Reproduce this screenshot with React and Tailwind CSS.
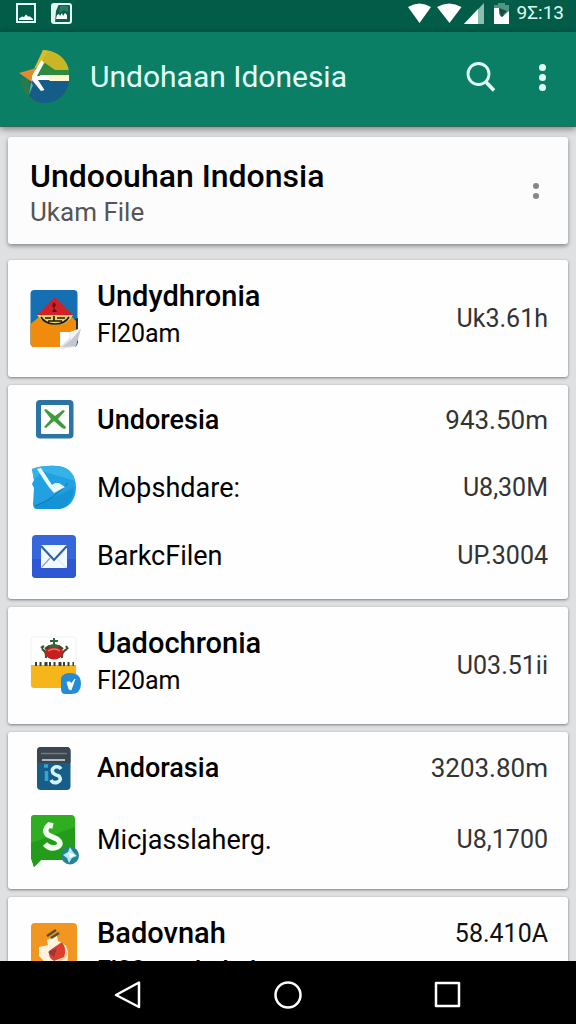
import React from "react";

function PictureIcon() {
  return (
    <svg width="20" height="20" viewBox="0 0 20 20" aria-hidden="true">
      <rect x="1" y="1" width="18" height="18" fill="none" stroke="#e4fff6" strokeWidth="2" />
      <path d="M3 17 V15.500 L6 13.500 L8 14 L10 11.500 L12 13.500 L14 13.500 L17 16 V17 Z" fill="#fff" />
    </svg>
  );
}

function NoteIcon() {
  return (
    <svg width="21" height="21" viewBox="0 0 21 21" aria-hidden="true">
      <rect x="1" y="1" width="19" height="19" rx="2" fill="#0a6049" stroke="#e4fff6" strokeWidth="2" />
      <path d="M1 1 H8 L5 8 L4 20 H1 Z" fill="#dff7ee" />
      <path d="M9 3 H17 V9 L13 7 L8 10 Z" fill="#2b7b66" />
      <path d="M5 16 L6 12 L8 11 L9 13 L11 10 L12 13 L14 10 L16 12 V16 Z" fill="#fff" />
    </svg>
  );
}

function StatusIcons() {
  return (
    <svg width="102" height="24" viewBox="407 1 102 24" aria-hidden="true">
      <path d="M408 7 Q419.500 0 431 7 L419.500 23 Z" fill="#fff" />
      <path d="M437 7 Q449 0 461.500 7 L449.500 23 Z" fill="#fff" />
      <path d="M464 24 L484 3 V24 Z" fill="#8dbfae" />
      <path d="M464 24 L478 9 V24 Z" fill="#fff" />
      <path d="M494 5 H498 V3 H505 V5 H509 V15 H494 Z" fill="#4f9582" />
      <path d="M494 8 H499 V14 L502 17 L509 11 V24 H494 Z" fill="#fff" />
      <path d="M499 8 L507 11 L501 17 Z" fill="#16513f" />
    </svg>
  );
}

function Logo() {
  return (
    <svg width="52" height="56" viewBox="18 50 52 56" className="shrink-0" aria-hidden="true">
      <path d="M43 51 C57 51 68 61 69 73 H36 Z" fill="#c9b526" />
      <path d="M37 67 L45 64 L55 71 L69 71 V76 H33 Z" fill="#2d8a3f" />
      <path d="M20 80 C22 94 30 103 44 104 L34 80 Z" fill="#2a7a4c" />
      <path d="M30 81 H69 C68 95 57 104 44 104 C38 104 33 101 29 97 Z" fill="#155c88" />
      <path d="M43 51 L48 53 L38 68 L34 70 Z" fill="#d7bd2c" />
      <path d="M19 74 L36 69 L32 83 Z" fill="#e08c2c" />
      <path d="M35 70 L31 82 L36 77 Z" fill="#f0c46a" />
      <path d="M40 76 H69 V82 H50 L48 80 H38 Z" fill="#fff6cf" />
      <path d="M41.500 61 L44 64 L37 77 H48 L50 81 H38 L44.500 91 L41 92 L32 81 V77 Z" fill="#fff" />
      <path d="M31 83 L29 96 L33 86 Z" fill="#57b9a0" />
    </svg>
  );
}

function SearchIcon() {
  return (
    <svg width="30" height="32" viewBox="466 61 30 32" fill="none" stroke="#dffff5" aria-hidden="true">
      <circle cx="478.500" cy="74" r="10.500" strokeWidth="2.800" />
      <path d="M485.500 81.500 L494 90.500" strokeWidth="3.600" />
    </svg>
  );
}

function FolderIcon() {
  return (
    <svg width="52" height="60" viewBox="30 288 52 60" className="shrink-0" aria-hidden="true">
      <rect x="30.500" y="289" width="47" height="57" rx="4" fill="#1470b3" />
      <path d="M70 320 L78 317 V342 L66 346 Z" fill="#2a3138" />
      <path d="M55 296 L73 314 H37 Z" fill="#d02128" />
      <path d="M54 301 l2 3 -2 3 3 4 h-5 l2 -4 -2 -2 z" fill="#5d0e15" />
      <path d="M30.500 323 L39 316 L55 323 L72 316 L76 320 V346 H34.500 Q30.500 346 30.500 342 Z" fill="#f18b0c" />
      <path d="M37 314 H73 Q68 324 55 324 Q44 324 37 314 Z" fill="#eed36a" />
      <path d="M41 316 Q45 323 55 323 Q65 323 69 316 M45 317 H51 M57 317 H65 M54 315 V320 M48 320 H62" fill="none" stroke="#1c1a12" strokeWidth="1.700" />
      <path d="M60 331 H72 L81 327 L75 346 L61 348 Z" fill="#e4e5ea" />
      <path d="M60 331 H69 L70 336 L60 346 Z" fill="#fff" />
      <path d="M62 346 L72 338 L81 328 L76 345 Z" fill="#c4c7cf" />
      <path d="M70 331 L81 327 L71 339 Z" fill="#f5f5f7" />
    </svg>
  );
}

function CrossIcon() {
  return (
    <svg width="52" height="40" viewBox="30 401 52 40" className="shrink-0" aria-hidden="true">
      <rect x="36" y="401" width="37.500" height="38.500" rx="4" fill="#2b74a6" />
      <rect x="41" y="406" width="28" height="29" rx="1" fill="#fff" />
      <path d="M44 411 L46 410 L55 417 L63 411 L65 412 L58 420 L66 428 L65 430 L62 429 L54 422 L46 429 L44 428 L51 420 Z" fill="#3f9c3c" />
    </svg>
  );
}

function ShareIcon() {
  return (
    <svg width="52" height="46" viewBox="30 466 52 46" className="shrink-0" aria-hidden="true">
      <path d="M32 470 Q43 466 58 467 C69 468 76 477 76 488 C76 502 68 510 58 510 H37 Q33 510 33 505 L34 489 L32 485 L34 481 Z" fill="#21a1e1" />
      <path d="M32 470 Q43 466 58 467 C69 468 74 475 75 482 L42 472 L34 481 Z" fill="#36b2ea" />
      <path d="M34 507 L74 489 C73 502 66 510 57 510 H37 Z" fill="#1494d5" />
      <path d="M35 507 Q54 500 68 484" fill="none" stroke="#1474ad" strokeWidth="1" />
      <path d="M37 470 L41 469 L52 486 L55 484 L59 484 L65 488 L54 494 Q49 489 44 481 Z" fill="#e9fbff" />
    </svg>
  );
}

function MailIcon() {
  return (
    <svg width="52" height="44" viewBox="30 537 52 44" className="shrink-0" aria-hidden="true">
      <rect x="32" y="538" width="44" height="43" rx="4" fill="#3566dc" />
      <path d="M32 562 H76 V577 Q76 581 72 581 H36 Q32 581 32 577 Z" fill="#2e58d3" />
      <rect x="41" y="548" width="26" height="23" rx="1" fill="#f2faff" />
      <path d="M41 549 L54 563 L67 549" fill="none" stroke="#2e62a7" strokeWidth="2.200" />
      <path d="M42 570 L50 561" stroke="#8f9fc0" strokeWidth="1.200" />
      <path d="M58 562 L66 571" stroke="#d4e1f1" strokeWidth="1" />
    </svg>
  );
}

function PotIcon() {
  return (
    <svg width="52" height="60" viewBox="30 638 52 60" className="shrink-0" aria-hidden="true">
      <rect x="31" y="639" width="45" height="50" rx="3" fill="#fefefe" stroke="#f1f1f1" />
      <path d="M31 667 H76 V690 H34 Q31 690 31 687 Z" fill="#f6b51b" />
      <path d="M42 651 Q47 654 46 660 M67 651 Q61 654 62 660 M41 650 l3 -2 M66 648 l2 3" fill="none" stroke="#3e5230" strokeWidth="2.200" />
      <ellipse cx="54" cy="654" rx="9" ry="7.500" fill="#c7201c" />
      <path d="M45 651 Q54 644 63 651" fill="none" stroke="#42452b" strokeWidth="2.200" />
      <path d="M54 640 V648 M50 643 H58 M48 648 H60" stroke="#2f6936" strokeWidth="2" />
      <path d="M48 653 Q54 649 60 653" fill="none" stroke="#ee7165" strokeWidth="1.500" />
      <path d="M35 666 H74" stroke="#33402b" strokeWidth="4" strokeDasharray="2 2.500 2 3 3 1.500" />
      <path d="M61 680 Q63 675 70 675 Q81 675 81 686 Q81 696 71 696 H65 Q61 696 61 691 Z" fill="#258bd6" />
      <path d="M67 684 L70 684 L71 686 L75 681 L71 692 L69 691 Z" fill="#f2ffff" stroke="#f2ffff" />
    </svg>
  );
}

function PhoneIcon() {
  return (
    <svg width="52" height="44" viewBox="30 746 52 44" className="shrink-0" aria-hidden="true">
      <rect x="37" y="747" width="33.500" height="43" rx="4" fill="#165d88" />
      <path d="M37 763 V751 Q37 747 41 747 H66 Q70.500 747 70.500 751 V763 Z" fill="#3d454f" />
      <path d="M41 753.500 H67" stroke="#717983" strokeWidth="1.500" />
      <path d="M42 760 H65" stroke="#d8e1e7" strokeWidth="1.500" />
      <path d="M61 769 Q59 766 55 767 Q51 769 53 773 Q55 775 59 776 Q62 780 58 782 Q53 784 51 780" fill="none" stroke="#d0f5fd" strokeWidth="3.600" />
      <path d="M44 766 H48 M46.500 771 V781" stroke="#35a5cb" strokeWidth="3.500" />
    </svg>
  );
}

function ChatIcon() {
  return (
    <svg width="52" height="54" viewBox="30 816 52 54" className="shrink-0" aria-hidden="true">
      <path d="M34 818 H71 Q75 818 75 822 V863 H41 L34 870 L31 861 V821 Q31 818 34 818 Z" fill="#2eae20" />
      <path d="M31 846 L75 830 V863 H41 L34 870 L31 861 Z" fill="#239c1b" />
      <path d="M53 829 L49 828 Q43 833 48 838 L57 842 Q63 847 57 850 Q50 853 45 847" fill="none" stroke="#f3fff0" strokeWidth="5.500" />
      <circle cx="70" cy="858.500" r="9" fill="#27828d" />
      <path d="M63 858 L68 855 L70 850 L73 855 L77 859 L72 861 L69 866 L67 861 Z" fill="#aee8f5" />
      <path d="M68 855 L75 858 L70 861 Z" fill="#fff" />
    </svg>
  );
}

function FruitIcon() {
  return (
    <svg width="52" height="66" viewBox="30 922 52 66" className="shrink-0" aria-hidden="true">
      <rect x="31" y="922" width="46" height="57" rx="4" fill="#f29622" />
      <path d="M47 939 L57 935 L58 940 Q68 942 68 954 Q68 968 56 971 Q46 966 43 959 L39 955 L39 946 L48 944 Z" fill="#fff3df" />
      <path d="M58 941 Q68 947 67 954 Q64 961 56 961 Q65 956 64 948 Z" fill="#f8c98e" />
      <path d="M49 950 L56 945 L62 941 Q67 948 64 956 L54 960 Q48 957 49 950 Z" fill="#dc3f2b" />
      <path d="M48 951 L57 947 L54 956 Z" fill="#9a3542" />
      <path d="M47 935 L56 929 M51 937 L59 932" stroke="#56502b" strokeWidth="2.500" />
    </svg>
  );
}

const groups = [
  {
    rows: [{ icon: FolderIcon, title: "Undydhronia", sub: "Fl20am", amount: "Uk3.61h" }],
  },
  {
    pad: "pt-px pb-[9px]",
    height: "min-h-[68px]",
    rows: [
      { icon: CrossIcon, title: "Undoresia", bold: true, amount: "943.50m" },
      { icon: ShareIcon, title: "Moþshdare:", amount: "U8,30M" },
      { icon: MailIcon, title: "BarkcFilen", amount: "UP.3004" },
    ],
  },
  {
    rows: [{ icon: PotIcon, title: "Uadochronia", sub: "Fl20am", amount: "U03.51ii" }],
  },
  {
    pad: "pb-[13px]",
    height: "min-h-[72px]",
    rows: [
      { icon: PhoneIcon, title: "Andorasia", bold: true, amount: "3203.80m" },
      { icon: ChatIcon, title: "Micjasslaherg.", amount: "U8,1700" },
    ],
  },
  {
    rows: [{ icon: FruitIcon, title: "Badovnah", sub: "Fl32am dedad", strong: true, amount: "58.410A" }],
  },
];

function Row({ row, height }) {
  const Icon = row.icon;
  const isBold = row.bold || row.sub;
  return (
    <li className={`flex items-center gap-[19px] pl-[22px] pr-5 ${row.sub ? "min-h-[117px]" : height}`}>
      <span className="flex w-12 shrink-0">
        <Icon />
      </span>
      <div className={`min-w-0 flex-1 ${row.sub ? "pb-2" : ""}`}>
        <h2
          className={`leading-[38px] ${row.sub ? "text-[29px]" : "text-[27px]"} ${isBold ? "font-medium" : "font-normal"}`}
        >
          {row.title}
        </h2>
        {row.sub && (
          <p className={`text-[25px] leading-[38px] ${row.strong ? "font-medium" : "font-normal"}`}>{row.sub}</p>
        )}
      </div>
      <span
        className={`leading-[38px] ${row.bold ? "text-[26px]" : "text-[25px]"} ${row.strong ? "self-start pt-[18px] text-[#111]" : "text-[#333]"}`}
      >
        {row.amount}
      </span>
    </li>
  );
}

export default function App() {
  return (
    <div className="flex h-screen flex-col overflow-hidden bg-[#dfe0e2] font-[Roboto,sans-serif] text-black">
      <div className="flex h-8 shrink-0 items-center justify-between bg-[#035c48] pb-1.5 pl-4 pr-3 text-white">
        <div className="flex items-center gap-[15px]">
          <PictureIcon />
          <NoteIcon />
        </div>
        <div className="flex items-center gap-2">
          <StatusIcons />
          <span className="text-[19px] leading-6 text-[#dffff5]">9Σ:13</span>
        </div>
      </div>

      <header className="z-10 flex h-[95px] shrink-0 items-center border-b border-[#35665a] bg-[#0a7f65] pb-1 pl-[18px] pr-5 shadow-[0_2px_7px_rgba(0,0,0,0.45)]">
        <Logo />
        <h1 className="ml-5 flex-1 text-[30px] leading-9 text-[#e4fff8]">Undohaan Idonesia</h1>
        <button type="button" aria-label="Search" className="mr-8">
          <SearchIcon />
        </button>
        <button type="button" aria-label="More options" className="flex w-7 flex-col items-center gap-[3px]">
          <i className="size-[7px] rounded-full bg-[#dffff5]" />
          <i className="size-[7px] rounded-full bg-[#dffff5]" />
          <i className="size-[7px] rounded-full bg-[#dffff5]" />
        </button>
      </header>

      <main className="min-h-0 flex-1 overflow-hidden px-2 pt-[10px]">
        <section className="mb-4 flex min-h-[107px] items-center justify-between rounded-[3px] bg-[#fcfcfc] pl-[22px] pr-4 shadow-[0_2px_4px_rgba(0,0,0,0.4)]">
          <div className="pt-1">
            <h2 className="text-[32px] font-medium leading-[38px]">Undoouhan Indonsia</h2>
            <p className="text-[26px] leading-[34px] text-[#555]">Ukam File</p>
          </div>
          <button type="button" aria-label="Section options" className="flex w-8 flex-col items-center gap-1">
            <i className="size-[6px] rounded-full bg-[#868686]" />
            <i className="size-[6px] rounded-full bg-[#868686]" />
          </button>
        </section>

        <div className="flex flex-col gap-2">
          {groups.map((group, i) => (
            <ul
              key={i}
              className={`rounded-[3px] bg-[#fefefe] shadow-[0_1px_3px_rgba(0,0,0,0.45)] ${group.pad || ""}`}
            >
              {group.rows.map((row) => (
                <Row key={row.title} row={row} height={group.height} />
              ))}
            </ul>
          ))}
        </div>
      </main>

      <nav className="z-10 grid h-[63px] shrink-0 grid-cols-3 bg-black px-12 pt-1" aria-label="System navigation">
        <button type="button" aria-label="Back" className="flex items-center justify-center">
          <svg width="30" height="30" viewBox="0 0 30 30" fill="none" stroke="#fff" strokeWidth="2.500" strokeLinejoin="round">
            <path d="M26 2.500 V27 L3 15 Z" />
          </svg>
        </button>
        <button type="button" aria-label="Home" className="flex items-center justify-center">
          <svg width="30" height="30" viewBox="0 0 30 30" fill="none" stroke="#fff" strokeWidth="2.500">
            <circle cx="15" cy="15" r="12.500" />
          </svg>
        </button>
        <button type="button" aria-label="Recent apps" className="flex items-center justify-center">
          <svg width="30" height="30" viewBox="0 0 30 30" fill="none" stroke="#fff" strokeWidth="2.500" strokeLinejoin="round">
            <rect x="3" y="3" width="23" height="23" />
          </svg>
        </button>
      </nav>
    </div>
  );
}
